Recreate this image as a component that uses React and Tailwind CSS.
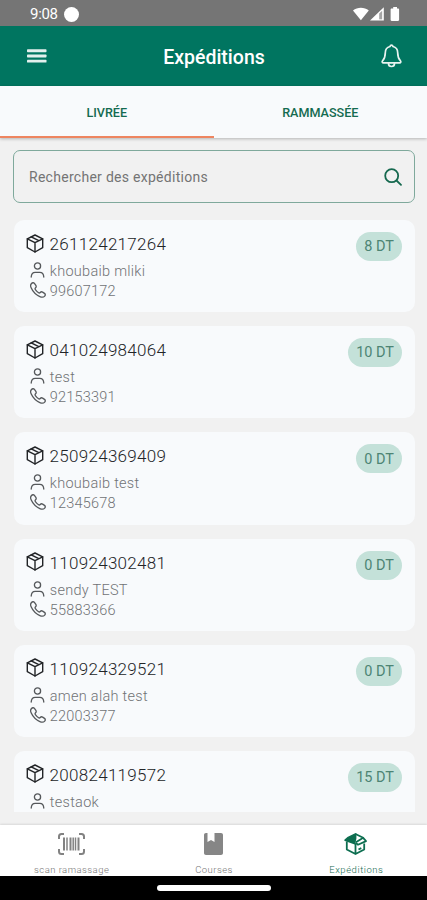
const shipments = [
  { code: '261124217264', name: 'khoubaib mliki', phone: '99607172', price: '8 DT' },
  { code: '041024984064', name: 'test', phone: '92153391', price: '10 DT' },
  { code: '250924369409', name: 'khoubaib test', phone: '12345678', price: '0 DT' },
  { code: '110924302481', name: 'sendy TEST', phone: '55883366', price: '0 DT' },
  { code: '110924329521', name: 'amen alah test', phone: '22003377', price: '0 DT' },
  { code: '200824119572', name: 'testaok', phone: '', price: '15 DT' },
]

function StatusBar() {
  return (
    <div className="h-[26px] shrink-0 bg-[#757575] text-white flex items-center justify-between pl-[30px] pr-[27px]">
      <div className="flex items-center gap-[6px] pt-[2px]">
        <span className="text-[15px] leading-none tracking-[-0.3px] w-[28px] whitespace-nowrap">9:08</span>
        <span className="w-[15px] h-[15px] rounded-full bg-white" />
      </div>
      <svg className="w-[47px] h-[14px] mt-[1px]" viewBox="0 0 47 14" fill="white">
        <path d="M0 3.400C4.400-.2 11.400-.2 15.800 3.400L7.900 13.200z" />
        <path fillRule="evenodd" d="M17 13.500 30.800.3V13.500zM26.300 6.600v5.600h2.800V3.900z" />
        <path fillOpacity=".35" d="M26.300 6.600 29.100 3.900v8.300h-2.800z" />
        <path d="M40.200 0h3.800v1.500h1c.7 0 1.100.4 1.100 1.100v10.200c0 .7-.4 1.100-1.100 1.100h-6.300c-.7 0-1.100-.4-1.100-1.100V2.600c0-.7.4-1.100 1.100-1.100h1.500z" />
      </svg>
    </div>
  )
}

function Header() {
  return (
    <header className="h-[60px] shrink-0 bg-[#007560] text-white flex items-center justify-between pl-[27px] pr-[25px]">
      <svg className="w-[20px] h-[14px]" viewBox="0 0 20 14" fill="#e3f0ed">
        <rect y="0.300" width="19.500" height="2.900" rx="0.700" />
        <rect y="5.500" width="19.500" height="2.900" rx="0.700" />
        <rect y="10.700" width="19.500" height="2.900" rx="0.700" />
      </svg>
      <h1 className="text-[19.500px] font-medium pt-[3px]">Expéditions</h1>
      <svg className="w-[21px] h-[24px]" viewBox="0 0 21 24" fill="none" stroke="#e8f3f0" strokeWidth="1.700" strokeLinejoin="round" strokeLinecap="round">
        <path d="M10.500 1.200c-.8 0-1.300.5-1.500 1.300C6 3.200 4.300 5.700 4.300 8.700c0 5-1.100 6.300-2.700 8.100-.8.900-.4 2 .8 2h16.200c1.200 0 1.600-1.100.8-2-1.600-1.800-2.700-3.100-2.700-8.100 0-3-1.700-5.500-4.700-6.200-.2-.8-.7-1.300-1.500-1.300z" />
        <path d="M7.500 19v.5a3 3 0 0 0 6 0V19" />
      </svg>
    </header>
  )
}

function Tabs() {
  return (
    <div className="h-[52px] shrink-0 bg-[#f8fafc] flex text-[12.600px] font-medium text-[#146b50] shadow-[0_1px_3px_rgba(0,0,0,0.25)]">
      <div className="w-1/2 flex items-center justify-center pt-[4px] border-b-[2px] border-[#ee8560]">LIVRÉE</div>
      <div className="w-1/2 flex items-center justify-center pt-[4px] border-b-[2px] border-transparent">RAMMASSÉE</div>
    </div>
  )
}

function BoxIcon() {
  return (
    <svg className="w-[18px] h-[19px] shrink-0 -mt-[2px]" viewBox="0 0 18 19" fill="none" stroke="#222427" strokeWidth="1.400" strokeLinejoin="round" strokeLinecap="round">
      <path d="M9 1 16.700 4.800V13.700L9 18 1.300 13.700V4.800z" />
      <path d="M1.300 4.800 9 8.600l7.700-3.800M9 8.600V18M5.200 2.900l7.600 3.800" />
    </svg>
  )
}

function PersonIcon() {
  return (
    <svg className="w-[15px] h-[16px] shrink-0 -mt-[4px]" viewBox="0 0 15 16" fill="none" stroke="#55585b" strokeWidth="1.300" strokeLinecap="round">
      <circle cx="7.500" cy="4" r="3.100" />
      <path d="M1.200 15c.2-3 1.600-4.600 4-4.600h4.600c2.400 0 3.800 1.600 4 4.600" />
    </svg>
  )
}

function PhoneIcon() {
  return (
    <svg className="w-[16px] h-[16px] shrink-0 -mt-[4px]" viewBox="0 0 17 17" fill="none" stroke="#55585b" strokeWidth="1.400" strokeLinejoin="round">
      <path d="M1.400 1.800C2.500.6 3.900.5 4.700 1.500l1.500 2.200c.6.9.5 1.700-.3 2.500-.7.700-.7 1.200-.2 1.900 1 1.400 2 2.400 3.400 3.300.7.500 1.200.4 1.800-.3.700-.8 1.600-.9 2.500-.3l2 1.300c1.100.8 1.100 1.900.2 2.900-1.100 1.200-2.600 1.500-4.600.7C6.600 14 3 10.300 1.200 6.200.4 4.300.4 2.900 1.400 1.800z" />
    </svg>
  )
}

function ShipmentCard({ item }) {
  return (
    <div className="h-[92.200px] shrink-0 rounded-[10px] bg-[#f8fafc] flex justify-between items-start pl-[12.500px] pr-[13px] pt-[12px]">
      <div>
        <div className="h-[24px] flex items-center gap-[5.500px]">
          <BoxIcon />
          <span className="text-[17px] leading-[24px] font-light tracking-[0.300px] text-[#222427]">{item.code}</span>
        </div>
        <div className="h-[20px] mt-[6px] pl-[3.500px] flex items-center gap-[5.300px]">
          <PersonIcon />
          <span className="text-[14.500px] leading-[20px] font-light tracking-[0.280px] text-[#707275]">{item.name}</span>
        </div>
        <div className="h-[20px] pl-[3.500px] flex items-center gap-[4.300px]">
          <PhoneIcon />
          <span className="text-[14.500px] leading-[20px] font-light tracking-[0.200px] text-[#707275]">{item.phone}</span>
        </div>
      </div>
      <span className="h-[29px] rounded-full bg-[#c4e1d9] px-[8px] pt-px flex items-center text-[14.500px] text-[#4d8474]">
        {item.price}
      </span>
    </div>
  )
}

function ScanIcon() {
  return (
    <svg className="w-[27px] h-[22px]" viewBox="0 0 27 22" fill="none" stroke="#828282">
      <path strokeWidth="2" d="M1 6V3.500C1 2 2 1 3.500 1H6M21 1h2.500C25 1 26 2 26 3.500V6M26 16v2.500c0 1.500-1 2.500-2.500 2.500H21M6 21H3.500C2 21 1 20 1 18.500V16" />
      <path strokeWidth="2" d="M6 4.500v13M12.500 4.500v13M20.500 4.500v13" />
      <path strokeWidth="1.500" d="M9 4.500v13M15.200 4.500v13M17.500 4.500v13" />
    </svg>
  )
}

function BookIcon() {
  return (
    <svg className="w-[19px] h-[22px]" viewBox="0 0 19 22" fill="#868686">
      <path d="M2 0h1.500v9l3.500-2.100L10.500 9V0H17c1.200 0 2 .8 2 2v18c0 1.200-.8 2-2 2H2c-1.200 0-2-.8-2-2V2C0 .8.800 0 2 0z" />
    </svg>
  )
}

function OpenBoxIcon() {
  return (
    <svg className="w-[23px] h-[22px]" viewBox="0 0 23 22" fill="none" stroke="#0d6e50" strokeWidth="1.800" strokeLinejoin="round">
      <path d="M2.800 8.500v8l8.700 4.500 8.700-4.500v-6M11.500 10.500V21" />
      <path fill="#0d6e50" d="M1.200 7.200 3.800 4.800 11.500 1v4.500l-1.200 5z" />
      <path d="M11.500 1l7.700 3.800-7.700 4.800M19.200 4.800l2.800 3.300-8 3.600-2.600-2.100" />
      <path d="M14.500 16.500l2.800-1.400" />
    </svg>
  )
}

function BottomNav() {
  return (
    <nav className="h-[51px] shrink-0 bg-white grid grid-cols-3 text-[9.500px] text-[#757575] overflow-hidden shadow-[0_-1px_2px_rgba(0,0,0,0.1)]">
      <div className="flex flex-col items-center pt-[8px]">
        <ScanIcon />
        <span className="mt-[7.500px] leading-[14px] font-light tracking-[0.450px] pl-px">scan ramassage</span>
      </div>
      <div className="flex flex-col items-center pt-[8px]">
        <BookIcon />
        <span className="mt-[7.500px] leading-[14px] font-light tracking-[0.450px] pl-px">Courses</span>
      </div>
      <div className="flex flex-col items-center pt-[8px] text-[#146b50]">
        <OpenBoxIcon />
        <span className="mt-[7.500px] leading-[14px] font-light tracking-[0.550px] pl-px">Expéditions</span>
      </div>
    </nav>
  )
}

function App() {
  return (
    <div className="w-full h-[900px] overflow-hidden bg-[#f1f1f1] flex flex-col font-['Roboto',sans-serif]">
      <StatusBar />
      <Header />
      <Tabs />

      {/* Search */}
      <div className="mt-[12px] ml-[13px] mr-[12px] h-[53px] shrink-0 rounded-[7px] border border-[#7fa99c] flex items-center justify-between pl-[15px] pr-[12px]">
        <span className="text-[14px] tracking-[0.280px] pt-px text-[#747474]">Rechercher des expéditions</span>
        <svg className="w-[18px] h-[18px]" viewBox="0 0 18 18" fill="none" stroke="#16694f" strokeWidth="1.800" strokeLinecap="round">
          <circle cx="7.700" cy="7.700" r="6.500" />
          <path d="m12.500 12.500 4.500 4.300" />
        </svg>
      </div>

      {/* Shipments list */}
      <div className="mt-[17px] ml-[13.500px] mr-[12px] h-[592px] shrink-0 overflow-hidden flex flex-col gap-[14px]">
        {shipments.map((item) => (
          <ShipmentCard key={item.code} item={item} />
        ))}
      </div>

      <div className="h-[13px] shrink-0" />
      <BottomNav />

      {/* System gesture bar */}
      <div className="h-[24px] shrink-0 bg-black flex justify-center pt-[9px]">
        <div className="w-[114px] h-[6px] rounded-full bg-white" />
      </div>
    </div>
  )
}

export default App
